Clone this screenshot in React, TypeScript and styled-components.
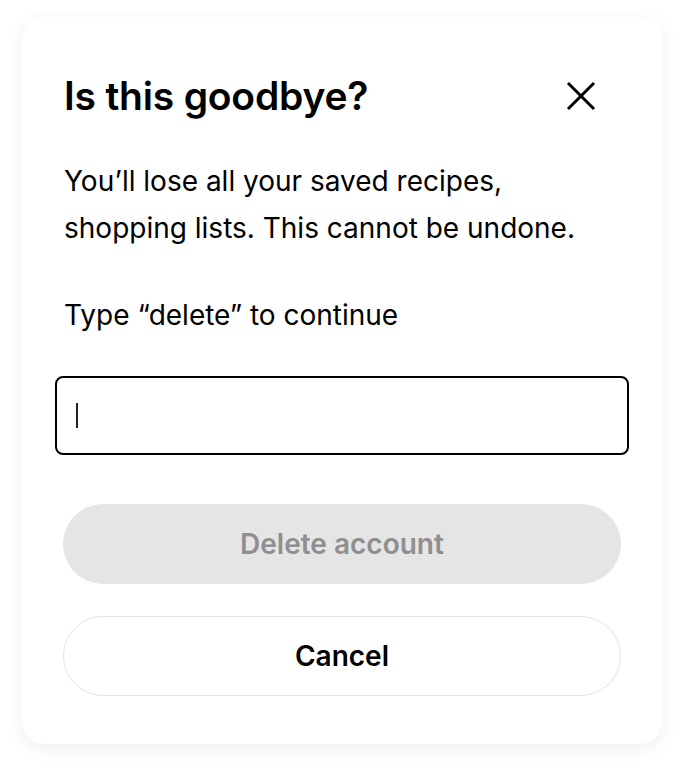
import React, { useState } from "react";
import styled, { createGlobalStyle } from "styled-components";

const GlobalStyle = createGlobalStyle`
  html, body {
    margin: 0;
    padding: 0;
    background: #ffffff;
  }
  body {
    font-family: "Inter", "Noto Sans", sans-serif;
    color: #000;
  }
`;

const Page = styled.div`
  width: 684px;
  height: 770px;
  padding: 17px 22px 0 22px;
  box-sizing: border-box;
`;

const Card = styled.div`
  width: 640px;
  box-sizing: border-box;
  background: #fff;
  border-radius: 22px;
  box-shadow: 0 4px 18px rgba(0, 0, 0, 0.07);
  padding: 55px 41px 48px 41px;
  display: flex;
  flex-direction: column;
`;

const Header = styled.div`
  display: flex;
  align-items: center;
  justify-content: space-between;
  padding-left: 1px;
`;

const Title = styled.h1`
  margin: 0;
  font-size: 39px;
  font-weight: 600;
  line-height: 48px;
  letter-spacing: -0.2px;
`;

const CloseButton = styled.button`
  border: none;
  background: none;
  padding: 0;
  margin-right: 25px;
  width: 30px;
  height: 30px;
  display: flex;
  align-items: center;
  justify-content: center;
  cursor: pointer;
`;

const Text = styled.p<{ $top: number }>`
  margin: ${(p) => p.$top}px 0 0 1px;
  font-size: 28px;
  line-height: 47px;
  font-weight: 400;
`;

const Caret = styled.span`
  display: block;
  width: 2px;
  height: 25px;
  background: #222;
`;

const InputBox = styled.div`
  margin: 37px -8px 0 -8px;
  height: 79px;
  box-sizing: border-box;
  border: 2px solid #000;
  border-radius: 8px;
  padding: 0 19px;
  display: flex;
  align-items: center;
`;

const Button = styled.button<{ $variant: "disabled" | "outline" }>`
  height: 80px;
  border-radius: 40px;
  font-family: inherit;
  font-size: 28px;
  font-weight: 600;
  cursor: pointer;
  box-sizing: border-box;
  background: ${(p) => (p.$variant === "disabled" ? "#e5e5e5" : "#fff")};
  color: ${(p) => (p.$variant === "disabled" ? "#8f8f8f" : "#000")};
  border: ${(p) =>
    p.$variant === "disabled" ? "none" : "1.5px solid #e2e2e8"};
`;

const Actions = styled.div`
  margin-top: 49px;
  display: flex;
  flex-direction: column;
  gap: 32px;
`;

const App: React.FunctionComponent = () => {
  const [value] = useState("");

  return (
    <Page>
      <GlobalStyle />
      <Card>
        <Header>
          <Title>Is this goodbye?</Title>
          <CloseButton aria-label="Close">
            <svg width="30" height="30" viewBox="0 0 30 30">
              <path
                d="M2 2 L28 28 M28 2 L2 28"
                stroke="#000"
                strokeWidth="3"
              />
            </svg>
          </CloseButton>
        </Header>
        <Text $top={38}>
          You’ll lose all your saved recipes,
          <br />
          shopping lists. This cannot be undone.
        </Text>
        <Text $top={40}>Type “delete” to continue</Text>
        <InputBox>
          <Caret />
        </InputBox>
        <Actions>
          <Button $variant="disabled" disabled={value !== "delete"}>
            Delete account
          </Button>
          <Button $variant="outline">Cancel</Button>
        </Actions>
      </Card>
    </Page>
  );
};

export default App;
